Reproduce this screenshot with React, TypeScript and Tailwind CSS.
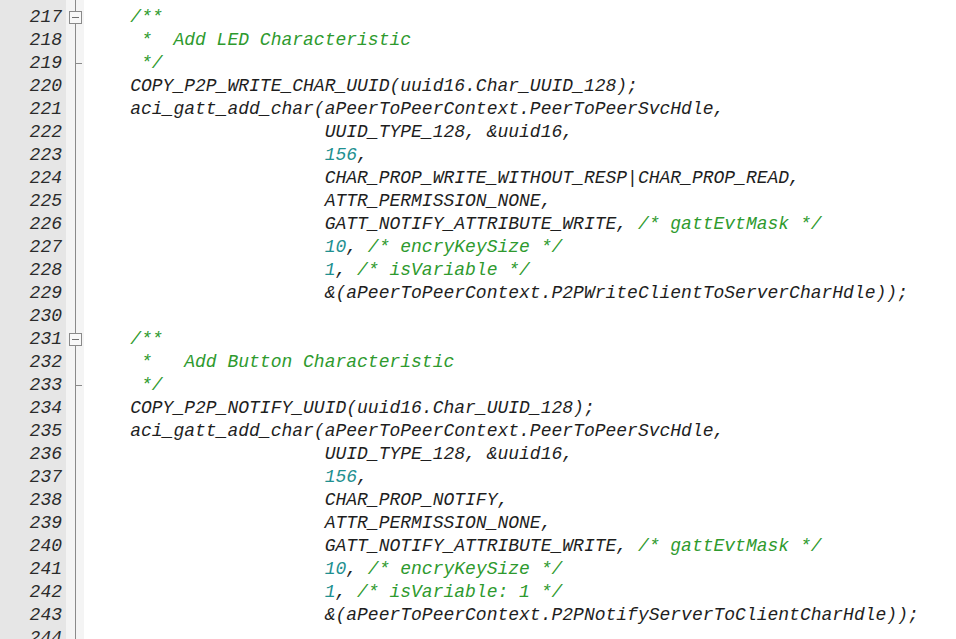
import React from 'react';

type Tok = { t: string; c?: 'cm' | 'num' };

const IND = '                      ';

const lines: Tok[][] = [
  [{ t: '    ' }, { t: '/**', c: 'cm' }],
  [{ t: '     *  Add LED Characteristic', c: 'cm' }],
  [{ t: '     */', c: 'cm' }],
  [{ t: '    COPY_P2P_WRITE_CHAR_UUID(uuid16.Char_UUID_128);' }],
  [{ t: '    aci_gatt_add_char(aPeerToPeerContext.PeerToPeerSvcHdle,' }],
  [{ t: IND + 'UUID_TYPE_128, &uuid16,' }],
  [{ t: IND }, { t: '156', c: 'num' }, { t: ',' }],
  [{ t: IND + 'CHAR_PROP_WRITE_WITHOUT_RESP|CHAR_PROP_READ,' }],
  [{ t: IND + 'ATTR_PERMISSION_NONE,' }],
  [{ t: IND + 'GATT_NOTIFY_ATTRIBUTE_WRITE, ' }, { t: '/* gattEvtMask */', c: 'cm' }],
  [{ t: IND }, { t: '10', c: 'num' }, { t: ', ' }, { t: '/* encryKeySize */', c: 'cm' }],
  [{ t: IND }, { t: '1', c: 'num' }, { t: ', ' }, { t: '/* isVariable */', c: 'cm' }],
  [{ t: IND + '&(aPeerToPeerContext.P2PWriteClientToServerCharHdle));' }],
  [],
  [{ t: '    ' }, { t: '/**', c: 'cm' }],
  [{ t: '     *   Add Button Characteristic', c: 'cm' }],
  [{ t: '     */', c: 'cm' }],
  [{ t: '    COPY_P2P_NOTIFY_UUID(uuid16.Char_UUID_128);' }],
  [{ t: '    aci_gatt_add_char(aPeerToPeerContext.PeerToPeerSvcHdle,' }],
  [{ t: IND + 'UUID_TYPE_128, &uuid16,' }],
  [{ t: IND }, { t: '156', c: 'num' }, { t: ',' }],
  [{ t: IND + 'CHAR_PROP_NOTIFY,' }],
  [{ t: IND + 'ATTR_PERMISSION_NONE,' }],
  [{ t: IND + 'GATT_NOTIFY_ATTRIBUTE_WRITE, ' }, { t: '/* gattEvtMask */', c: 'cm' }],
  [{ t: IND }, { t: '10', c: 'num' }, { t: ', ' }, { t: '/* encryKeySize */', c: 'cm' }],
  [{ t: IND }, { t: '1', c: 'num' }, { t: ', ' }, { t: '/* isVariable: 1 */', c: 'cm' }],
  [{ t: IND + '&(aPeerToPeerContext.P2PNotifyServerToClientCharHdle));' }],
  [],
];

// fold markers by line number
const folds: Record<number, 'open' | 'end'> = { 217: 'open', 219: 'end', 231: 'open', 233: 'end' };

const FoldMark = ({ kind }: { kind?: 'open' | 'end' }) => {
  if (kind === 'open') {
    return (
      <div className="relative z-10 h-[23px] flex items-center justify-center">
        <div className="w-[13px] h-[13px] border border-[#8a8a8a] bg-[#f8f8f8] flex items-center justify-center">
          <div className="w-[7px] h-px bg-[#707070]" />
        </div>
      </div>
    );
  }
  if (kind === 'end') {
    return (
      <div className="h-[23px] flex items-center pl-[9px]">
        <div className="w-[7px] h-px bg-[#8a8a8a]" />
      </div>
    );
  }
  return <div className="h-[23px]" />;
};

export default function App() {
  return (
    <div
      className="flex h-[639px] w-[956px] overflow-hidden bg-white text-[18px] leading-[23px] italic"
      style={{ fontFamily: '"Liberation Mono", "Courier New", monospace' }}
    >
      {/* line numbers */}
      <div className="w-[66px] shrink-0 bg-[#e6e6e6] pt-[6px] pr-[4px] text-right text-[#2b2b2b]">
        {lines.map((_, i) => (
          <div key={i} className="h-[23px]">{217 + i}</div>
        ))}
      </div>

      {/* fold margin */}
      <div className="relative w-[18px] shrink-0 bg-[#f4f4f4] pt-[6px]">
        <div className="absolute left-[9px] top-0 bottom-0 w-px bg-[#8a8a8a]" />
        {lines.map((_, i) => (
          <FoldMark key={i} kind={folds[217 + i]} />
        ))}
      </div>

      {/* code */}
      <div className="flex-1 pt-[6px] pl-[3px] text-[#1e1e1e]">
        {lines.map((toks, i) => (
          <div key={i} className="h-[23px] whitespace-pre">
            {toks.map((tk, j) => (
              <span
                key={j}
                className={tk.c === 'cm' ? 'text-[#2e9a2e]' : tk.c === 'num' ? 'text-[#1f9090]' : ''}
              >
                {tk.t}
              </span>
            ))}
          </div>
        ))}
      </div>
    </div>
  );
}
